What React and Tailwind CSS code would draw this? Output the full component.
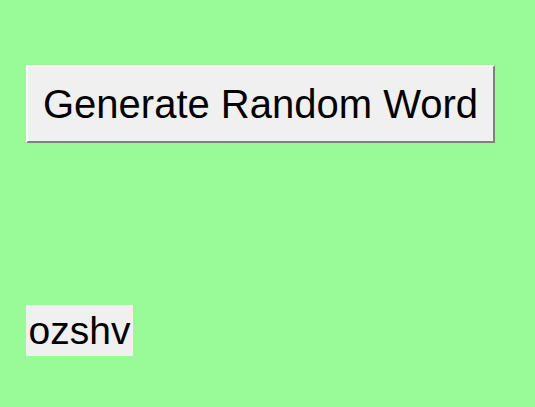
export default function App() {
  return (
    <div className="min-h-[407px] w-[535px] bg-[#98fb98] pl-[26px] pt-[65px] font-['Liberation_Sans',Arial,sans-serif] text-black">
      <button className="flex h-[78px] w-[469px] items-center justify-center border-2 border-t-white border-l-white border-r-[#808080] border-b-[#808080] bg-[#f0f0f0] text-[40px] leading-none">
        Generate Random Word
      </button>
      <div className="mt-[162px] inline-flex h-[51px] w-[107px] items-center justify-center bg-[#f0f0f0] text-[39px] leading-none">
        ozshv
      </div>
    </div>
  )
}
